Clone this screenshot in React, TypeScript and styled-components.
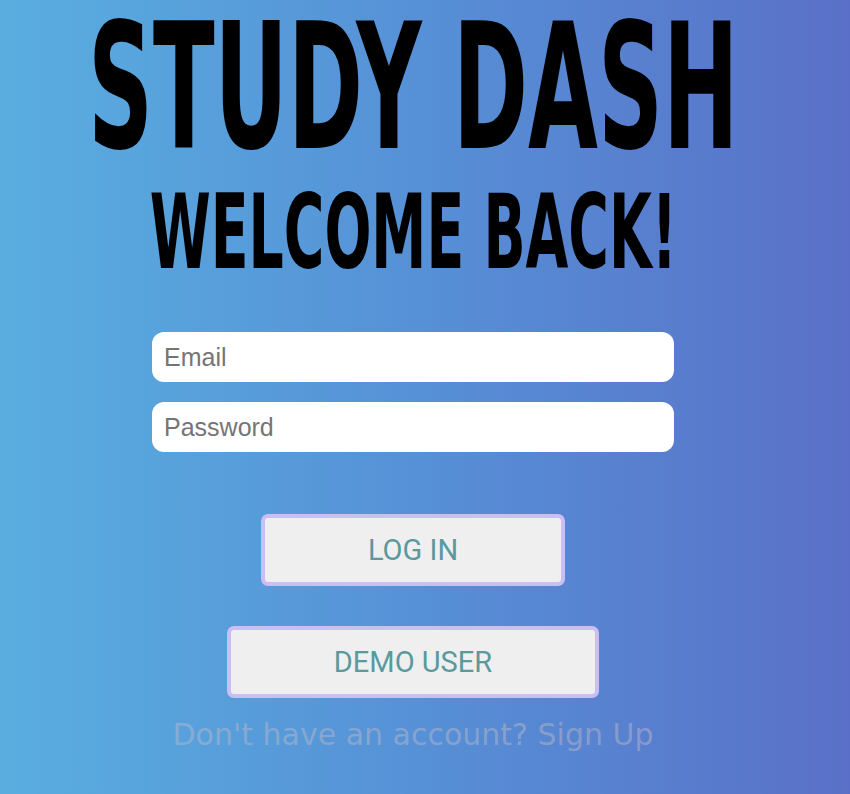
import styled, { createGlobalStyle } from 'styled-components';

const GlobalStyle = createGlobalStyle`
  html, body {
    margin: 0;
    padding: 0;
    overflow: hidden;
  }
  * {
    box-sizing: border-box;
  }
`;

export const Page = styled.main`
  min-height: 100vh;
  width: 100%;
  display: flex;
  flex-direction: column;
  align-items: center;
  padding-right: 24px;
  background: linear-gradient(to right, #59aee0 0%, #5690d6 50%, #5a70c8 100%);
  overflow: hidden;
`;

// condensed display heading: a bold face squeezed sideways and stretched up
const Heading = styled.h1<{ $size: number; $sx: number; $sy: number }>`
  margin: 0;
  width: 100%;
  height: ${(p) => Math.round(p.$size * p.$sy)}px;
  display: flex;
  justify-content: center;
  align-items: center;
  white-space: nowrap;
  font-family: 'DejaVu Sans', sans-serif;
  font-weight: 700;
  font-size: ${(p) => p.$size}px;
  line-height: 1;
  color: #000;
  > span {
    flex: none;
    transform: scale(${(p) => p.$sx}, ${(p) => p.$sy});
    transform-origin: center;
  }
`;

const Form = styled.form`
  display: flex;
  flex-direction: column;
  align-items: center;
  margin-top: 48px;
  > .fields {
    display: flex;
    flex-direction: column;
    gap: 20px;
  }
`;

const Field = styled.input`
  width: 522px;
  height: 50px;
  border: none;
  border-radius: 12px;
  background: #fff;
  padding: 0 12px;
  font-family: 'Liberation Sans', Arial, sans-serif;
  font-size: 25px;
  color: #222;
  outline: none;
  &::placeholder {
    color: #757575;
  }
`;

const Button = styled.button<{ $top: number }>`
  margin-top: ${(p) => p.$top}px;
  height: 72px;
  padding: 0 103px;
  background: #efefef;
  border: 4px solid #cdbdf6;
  border-radius: 7px;
  font-family: Roboto, 'Liberation Sans', sans-serif;
  font-size: 29px;
  color: #5a999d;
  cursor: pointer;
`;

const Footer = styled.p`
  margin: 19px 0 0;
  font-family: 'DejaVu Sans', Verdana, sans-serif;
  font-size: 30px;
  color: rgba(190, 185, 200, 0.48);
  > a {
    color: inherit;
    text-decoration: none;
  }
`;

const App = () => {
  return (
    <Page>
      <GlobalStyle />
      <Heading $size={100} $sx={0.903} $sy={1.75}>
        <span>STUDY DASH</span>
      </Heading>
      <Heading $size={80} $sx={0.691} $sy={1.2875} style={{ marginTop: 6 }}>
        <span>WELCOME BACK!</span>
      </Heading>
      <Form onSubmit={(e) => e.preventDefault()}>
        <div className='fields'>
          <Field type='email' placeholder='Email' />
          <Field type='password' placeholder='Password' />
        </div>
        <Button type='submit' $top={62}>
          LOG IN
        </Button>
        <Button type='button' $top={40}>
          DEMO USER
        </Button>
      </Form>
      <Footer>
        Don't have an account? <a href='#'>Sign Up</a>
      </Footer>
    </Page>
  );
};

export default App;
